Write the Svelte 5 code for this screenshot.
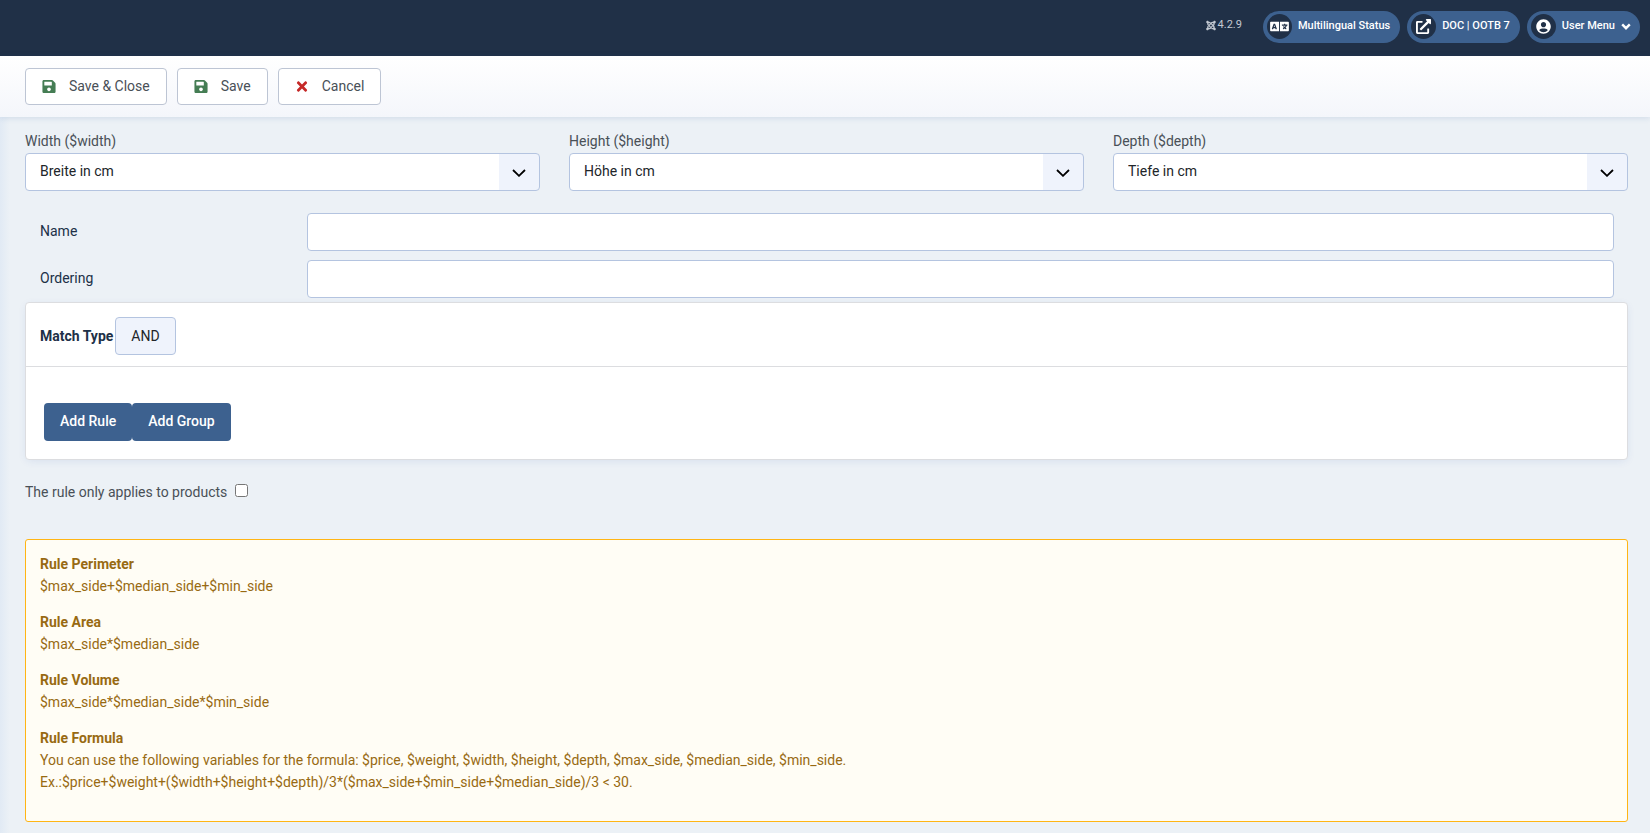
<script>
  let match = $state('AND');
  let onlyProducts = $state(false);
  let name = $state('');
  let ordering = $state('');

  const dimensions = [
    { id: 'width', label: 'Width ($width)', value: 'Breite in cm' },
    { id: 'height', label: 'Height ($height)', value: 'Höhe in cm' },
    { id: 'depth', label: 'Depth ($depth)', value: 'Tiefe in cm' }
  ];

  const help = [
    { title: 'Rule Perimeter', lines: ['$max_side+$median_side+$min_side'] },
    { title: 'Rule Area', lines: ['$max_side*$median_side'] },
    { title: 'Rule Volume', lines: ['$max_side*$median_side*$min_side'] },
    {
      title: 'Rule Formula',
      lines: [
        'You can use the following variables for the formula: $price, $weight, $width, $height, $depth, $max_side, $median_side, $min_side.',
        'Ex.:$price+$weight+($width+$height+$depth)/3*($max_side+$min_side+$median_side)/3 < 30.'
      ]
    }
  ];

  function toggleMatch() {
    match = match === 'AND' ? 'OR' : 'AND';
  }
</script>

{#snippet saveIcon()}
  <svg class="tool-icon save" viewBox="0 0 448 512" aria-hidden="true"><path d="M433.941 129.941l-83.882-83.882A48 48 0 0 0 316.118 32H48C21.49 32 0 53.49 0 80v352c0 26.51 21.49 48 48 48h352c26.51 0 48-21.49 48-48V163.882a48 48 0 0 0-14.059-33.941zM224 416c-35.346 0-64-28.654-64-64 0-35.346 28.654-64 64-64s64 28.654 64 64c0 35.346-28.654 64-64 64zm96-304.52V212c0 6.627-5.373 12-12 12H76c-6.627 0-12-5.373-12-12V108c0-6.627 5.373-12 12-12h228.52c3.183 0 6.235 1.264 8.485 3.515l3.48 3.48A11.996 11.996 0 0 1 320 111.48z" /></svg>
{/snippet}

<div class="page">
  <header class="topbar">
    <div class="version">
      <svg viewBox="0 0 448 512" aria-hidden="true"><path d="M.6 92.1C.6 58.8 27.4 32 60.4 32c30 0 54.5 21.9 59.2 50.2 32.6-7.6 67.1.6 96.5 30l-44.3 44.3c-20.5-20.5-42.6-16.3-55.4-3.5-14.3 14.3-14.3 37.9 0 52.2l99.5 99.5-44 44.3c-87.7-87.2-49.7-49.7-99.8-99.7-26.8-26.5-35-64.8-24.8-98.9C20.4 144.6.6 120.7.6 92.1zm129.5 116.4l44.3 44.3c10-10 89.7-89.7 99.7-99.8 14.3-14.3 37.6-14.3 51.9 0 12.8 12.8 17 35-3.5 55.4l44 44.3c31.2-31.2 38.5-67.6 28.9-101.2 29.2-4.1 51.9-29.2 51.9-59.5 0-33.2-26.8-60.1-59.8-60.1-30.3 0-55.4 22.5-59.5 51.6-33.8-9.9-71.7-1.5-98.3 25.1-18.3 19.1-71.1 71.5-99.6 99.9zm266.3 152.2c8.2-32.7-.9-68.5-26.3-93.9-11.8-12.2 5 4.7-99.5-99.7l-44.3 44.3 99.7 99.7c14.3 14.3 14.3 37.6 0 51.9-12.8 12.8-35 17-55.4-3.5l-44 44.3c27.6 30.2 68 38.8 102.7 28 5.5 27.4 29.7 48.1 58.9 48.1 33 0 59.8-26.8 59.8-60.1 0-30.2-22.5-55-51.6-59.1zm-84.3-53.1l-44-44.3c-87 86.4-50.4 50.4-99.7 99.8-14.3 14.3-37.6 14.3-51.9 0-13.1-13.4-16.9-35.3 3.2-55.4l-44-44.3c-30.2 30.2-38 65.2-29.5 98.3-26.7 6-46.2 29.9-46.2 58.2C0 453.2 26.8 480 59.8 480c28.6 0 52.5-19.8 58.6-46.7 32.7 8.2 68.5-.6 94.2-26 32.1-32 12.2-12.4 99.5-99.7z" /></svg>
      <span>4.2.9</span>
    </div>
    <nav class="pills" aria-label="Status">
      <button class="pill" type="button">
        <span class="disc"><svg width="19" height="15" viewBox="0 0 640 512" aria-hidden="true"><path d="M152.1 236.2c-3.5-12.1-7.8-33.2-7.8-33.2h-.5s-4.3 21.1-7.8 33.2l-11.1 37.5H163zM616 96H336v320h280c13.3 0 24-10.7 24-24V120c0-13.3-10.7-24-24-24zm-24 120c0 6.6-5.4 12-12 12h-11.4c-6.9 23.6-21.7 47.4-42.7 69.9 8.4 6.4 17.1 12.5 26.1 18 5.5 3.4 7.3 10.5 4.1 16.2l-7.9 13.9c-3.4 5.9-10.9 7.8-16.7 4.3-12.6-7.8-24.5-16.1-35.4-24.9-10.9 8.7-22.7 17.1-35.4 24.9-5.8 3.5-13.3 1.6-16.7-4.3l-7.9-13.9c-3.2-5.6-1.4-12.8 4.2-16.2 9.3-5.7 18-11.7 26.1-18-7.9-8.4-14.9-17-21-25.7-4-5.7-2.2-13.6 3.7-17.1l6.5-3.9 7.3-4.3c5.4-3.2 12.4-1.7 16 3.4 5 7 10.8 14 17.4 20.9 13.5-14.2 23.8-28.9 30-43.2H412c-6.6 0-12-5.4-12-12v-16c0-6.6 5.4-12 12-12h64v-16c0-6.6 5.4-12 12-12h16c6.6 0 12 5.4 12 12v16h64c6.6 0 12 5.4 12 12zM0 120v272c0 13.3 10.7 24 24 24h280V96H24c-13.3 0-24 10.7-24 24zm58.9 216.1L116.4 167c1.7-4.9 6.2-8.1 11.4-8.1h32.5c5.1 0 9.7 3.3 11.4 8.1l57.5 169.1c2.6 7.8-3.1 15.9-11.4 15.9h-22.9a12 12 0 0 1-11.5-8.6l-9.4-31.9h-60.2l-9.1 31.8c-1.5 5.1-6.2 8.7-11.5 8.7H70.3c-8.2 0-14-8.1-11.4-15.9z" /></svg></span>
        <span class="pill-text">Multilingual Status</span>
      </button>
      <a class="pill" href="#site">
        <span class="disc"><svg width="15" height="15" viewBox="0 0 512 512" aria-hidden="true"><path d="M432,320H400a16,16,0,0,0-16,16V448H64V128H208a16,16,0,0,0,16-16V80a16,16,0,0,0-16-16H48A48,48,0,0,0,0,112V464a48,48,0,0,0,48,48H400a48,48,0,0,0,48-48V336A16,16,0,0,0,432,320ZM488,0h-128c-21.37,0-32.05,25.91-17,41l35.73,35.73L135,320.37a24,24,0,0,0,0,34L157.67,377a24,24,0,0,0,34,0L435.28,133.32,471,169c15,15,41,4.5,41-17V24A24,24,0,0,0,488,0Z" /></svg></span>
        <span class="pill-text">DOC | OOTB 7</span>
      </a>
      <button class="pill user" type="button">
        <span class="disc"><svg width="15" height="15" viewBox="0 0 496 512" aria-hidden="true"><path d="M248 8C111 8 0 119 0 256s111 248 248 248 248-111 248-248S385 8 248 8zm0 96c48.6 0 88 39.4 88 88s-39.4 88-88 88-88-39.4-88-88 39.4-88 88-88zm0 344c-58.7 0-111.3-26.6-146.5-68.2 18.8-35.4 55.6-59.8 98.5-59.8 2.4 0 4.8.4 7.1 1.1 13 4.2 26.6 6.9 40.9 6.9 14.3 0 28-2.7 40.9-6.9 2.3-.7 4.7-1.1 7.1-1.1 42.9 0 79.7 24.4 98.5 59.8C359.3 421.4 306.7 448 248 448z" /></svg></span>
        <span class="pill-text">User Menu</span>
        <svg class="caret" viewBox="0 0 10 7" aria-hidden="true"><path d="M1.2 1.4 5 5.2 8.8 1.4" /></svg>
      </button>
    </nav>
  </header>

  <div class="body">
    <div class="toolbar" role="toolbar" aria-label="Toolbar">
      <button class="tool" type="button">{@render saveIcon()}<span>Save &amp; Close</span></button>
      <button class="tool" type="button">{@render saveIcon()}<span>Save</span></button>
      <button class="tool" type="button">
        <svg class="tool-icon cancel" viewBox="0 0 352 512" aria-hidden="true"><path d="M242.72 256l100.07-100.07c12.28-12.28 12.28-32.19 0-44.48l-22.24-22.24c-12.28-12.28-32.19-12.28-44.48 0L176 189.28 75.93 89.21c-12.28-12.28-32.19-12.28-44.48 0L9.21 111.45c-12.28 12.28-12.28 32.19 0 44.48L109.28 256 9.21 356.07c-12.28 12.28-12.28 32.19 0 44.48l22.24 22.24c12.28 12.28 32.2 12.28 44.48 0L176 322.72l100.07 100.07c12.28 12.28 32.2 12.28 44.48 0l22.24-22.24c12.28-12.28 12.28-32.19 0-44.48L242.72 256z" /></svg><span>Cancel</span>
      </button>
    </div>

    <main>
      <div class="dimensions">
        {#each dimensions as d (d.id)}
          <div class="dimension">
            <label for={d.id}>{d.label}</label>
            <select id={d.id} class="control">
              <option>{d.value}</option>
            </select>
          </div>
        {/each}
      </div>

      <div class="fields">
        <label for="name">Name</label>
        <input id="name" class="control" type="text" bind:value={name} />
        <label for="ordering">Ordering</label>
        <input id="ordering" class="control" type="text" bind:value={ordering} />
      </div>

      <section class="card">
        <div class="card-head">
          <strong id="match-label">Match Type</strong>
          <button class="match" type="button" aria-describedby="match-label" onclick={toggleMatch}>{match}</button>
        </div>
        <div class="card-body">
          <button class="primary" type="button">Add Rule</button>
          <button class="primary" type="button">Add Group</button>
        </div>
      </section>

      <div class="check">
        <label for="only-products">The rule only applies to products</label>
        <input id="only-products" type="checkbox" bind:checked={onlyProducts} />
      </div>

      <section class="notice">
        {#each help as item (item.title)}
          <p>
            <strong>{item.title}</strong>
            {#each item.lines as line}
              <span>{line}</span>
            {/each}
          </p>
        {/each}
      </section>
    </main>
  </div>
</div>

<style>
  :global(body) {
    margin: 0;
    background: #ecf1f6;
  }

  .page {
    display: flex;
    flex-direction: column;
    min-height: 100vh;
    font: 400 14px/22px Roboto, 'Liberation Sans', sans-serif;
    color: #212529;
  }

  .page *,
  .page {
    box-sizing: border-box;
  }

  button,
  input,
  select {
    margin: 0;
    font: inherit;
    color: inherit;
  }

  button {
    cursor: pointer;
  }

  .topbar {
    display: flex;
    justify-content: flex-end;
    align-items: flex-start;
    gap: 21px;
    height: 56px;
    padding: 11px 10px 0;
    background: #203047;
    font-size: 11px;
  }

  .version {
    display: flex;
    align-items: center;
    gap: 2px;
    height: 28px;
    color: #c3c9d2;
  }

  .version svg {
    width: 10px;
    height: 11px;
    fill: currentColor;
  }

  .pills {
    display: flex;
    gap: 7px;
  }

  .pill {
    display: flex;
    align-items: center;
    height: 32px;
    padding: 0 10px 0 4px;
    border: 0;
    border-radius: 16px;
    background: #3d618f;
    color: #fff;
    font-weight: 500;
    text-decoration: none;
  }

  .disc {
    display: flex;
    align-items: center;
    justify-content: center;
    width: 25px;
    height: 25px;
    margin: 0 6px 1px 0;
    border-radius: 50%;
    background: #203047;
  }

  .disc svg {
    fill: #fff;
  }

  .pill-text {
    padding-bottom: 3px;
  }

  .user {
    padding-right: 9px;
  }

  .caret {
    width: 10px;
    height: 7px;
    margin: 0 0 2px 6px;
    fill: none;
    stroke: #fff;
    stroke-width: 2.4;
  }

  .body {
    flex: 1;
    background: linear-gradient(90deg, #e1eaf4, #ecf1f6 10px);
  }

  .toolbar {
    display: flex;
    gap: 10px;
    padding: 12px 25px;
    background: linear-gradient(#fff, #f4f6fb);
    box-shadow: 0 1px 6px rgba(30, 80, 150, 0.14);
  }

  .tool {
    display: flex;
    align-items: center;
    gap: 12px;
    height: 37px;
    padding: 0 16px 0 15px;
    border: 1px solid #bdc5d4;
    border-radius: 4px;
    background: #fff;
    color: #495057;
  }

  .tool span {
    padding-bottom: 2px;
  }

  .tool-icon {
    width: 16px;
    height: 15px;
  }

  .save {
    fill: #457d54;
  }

  .cancel {
    fill: #c52827;
  }

  main {
    padding: 13px 22px 11px 25px;
  }

  .dimensions {
    display: grid;
    grid-template-columns: repeat(3, minmax(0, 1fr));
    gap: 29px;
  }

  .dimension label {
    display: block;
    margin-bottom: 1px;
    color: #495057;
  }

  .control {
    display: block;
    width: 100%;
    height: 38px;
    padding: 0 14px;
    border: 1px solid #b4c4e0;
    border-radius: 4px;
    background: #fff;
    color: #212529;
  }

  select.control {
    appearance: none;
    padding: 0 50px 3px 14px;
    background:
      url("data:image/svg+xml,%3Csvg xmlns='http://www.w3.org/2000/svg' viewBox='0 0 14 8'%3E%3Cpath d='M1 1 7 6.800 13 1' fill='none' stroke='%23000' stroke-width='1.800'/%3E%3C/svg%3E") no-repeat right 13px top 15px / 14px 8px,
      linear-gradient(#eff3fc, #eff3fc) no-repeat right / 40px 100%,
      #fff;
  }

  .fields {
    display: grid;
    grid-template-columns: 267px minmax(0, 1fr);
    row-gap: 9px;
    padding: 22px 14px 4px 15px;
  }

  .fields label {
    padding-top: 7px;
    color: #203047;
  }

  .card {
    border: 1px solid #dcdde0;
    border-radius: 4px;
    background: #fff;
    box-shadow: 0 2px 10px -2px rgba(30, 70, 170, 0.12);
  }

  .card-head {
    display: flex;
    align-items: center;
    gap: 2px;
    padding: 14px 14px 11px;
    border-bottom: 1px solid #dcdde0;
    color: #203047;
  }

  strong {
    font-weight: 700;
  }

  .match {
    height: 38px;
    padding: 0 15px;
    border: 1px solid #b4c4e0;
    border-radius: 4px;
    background: #eff3fc;
    color: #212529;
  }

  .card-body {
    display: flex;
    padding: 36px 18px 18px;
  }

  .primary {
    height: 38px;
    padding: 0 16px 2px;
    border: 0;
    border-radius: 4px;
    background: #3d618f;
    color: #fff;
    font-weight: 500;
  }

  .check {
    display: flex;
    align-items: center;
    gap: 8px;
    padding: 21px 0 36px;
    color: #495057;
  }

  .check input {
    width: 13px;
    height: 13px;
    margin-bottom: 3px;
  }

  .notice {
    padding: 14px 14px 13px;
    border: 1px solid #ffb514;
    border-radius: 3px;
    background: #fffdf5;
    color: #986a12;
  }

  .notice p {
    margin: 0 0 15px;
  }

  .notice strong,
  .notice span {
    display: block;
  }

  .notice strong {
    line-height: 21px;
  }
</style>
